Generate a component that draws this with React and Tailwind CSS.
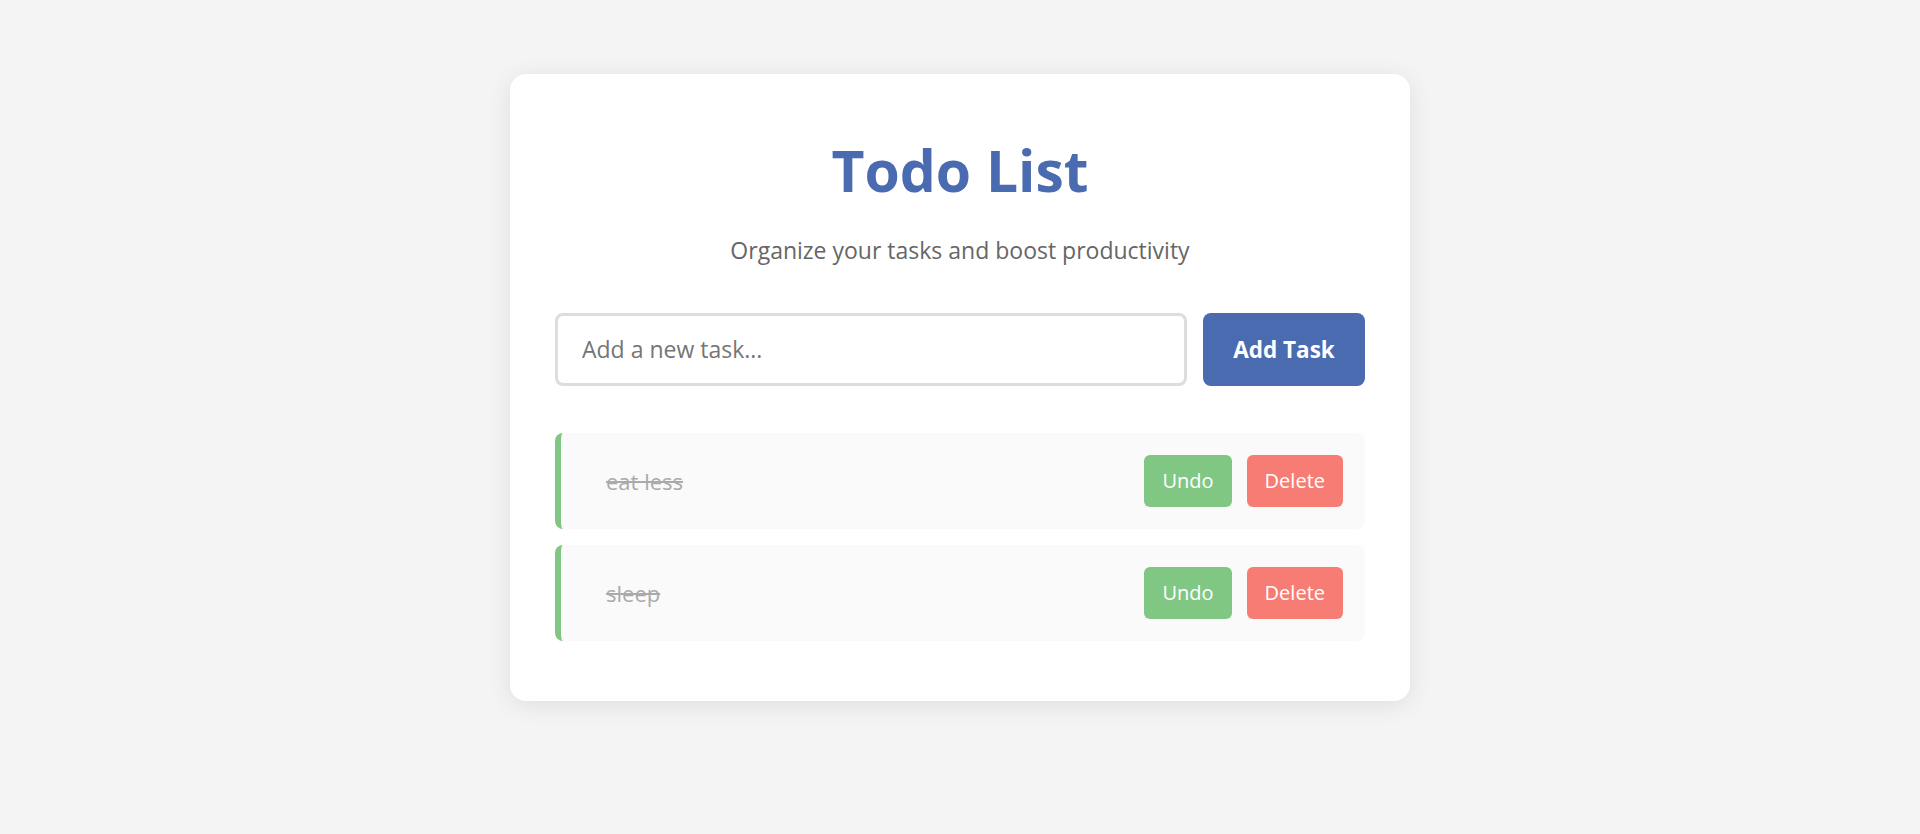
import { useState } from "react";

const initialTasks = [
  { id: 1, text: "eat less", done: true },
  { id: 2, text: "sleep", done: true },
];

const TaskItem = ({ task, onToggle, onDelete }) => (
  <li className="flex items-center justify-between h-[96px] bg-[#fafafa] rounded-lg border-l-[6px] border-[#81c784] pl-[45px] pr-[22px]">
    <span className={`text-[22px] ${task.done ? "line-through text-[#aaaaaa]" : "text-[#333333]"}`}>
      {task.text}
    </span>
    <div className="flex items-center gap-[15px]">
      <button
        onClick={() => onToggle(task.id)}
        className="h-[52px] px-[18px] rounded-md bg-[#81c784] text-white text-[20px]"
      >
        {task.done ? "Undo" : "Done"}
      </button>
      <button
        onClick={() => onDelete(task.id)}
        className="h-[52px] px-[18px] rounded-md bg-[#f77c73] text-white text-[20px]"
      >
        Delete
      </button>
    </div>
  </li>
);

export default function App() {
  const [tasks, setTasks] = useState(initialTasks);
  const [text, setText] = useState("");

  const addTask = () => {
    if (!text.trim()) return;
    setTasks([...tasks, { id: Date.now(), text: text.trim(), done: false }]);
    setText("");
  };

  return (
    <div className="min-h-screen bg-[#f4f4f4] pt-[74px] font-['Open_Sans',sans-serif]">
      <div className="mx-auto w-[900px] bg-white rounded-2xl shadow-[0_4px_24px_rgba(0,0,0,0.09)] p-[45px] pb-[60px]">
        <h1 className="mt-[15px] text-center text-[57px] leading-[72px] font-bold text-[#4a6bb0]">Todo List</h1>
        <p className="mt-[30px] text-center text-[23px] leading-[28px] text-[#666666]">
          Organize your tasks and boost productivity
        </p>

        {/* input row */}
        <div className="mt-[49px] flex gap-4 h-[73px]">
          <input
            value={text}
            onChange={(e) => setText(e.target.value)}
            onKeyDown={(e) => e.key === "Enter" && addTask()}
            placeholder="Add a new task..."
            className="flex-1 border-[3px] border-[#dddddd] rounded-lg px-6 text-[23px] text-[#333] placeholder:text-[#757575] outline-none"
          />
          <button
            onClick={addTask}
            className="w-[162px] rounded-lg bg-[#4a6bb0] text-white text-[22.5px] font-bold"
          >
            Add Task
          </button>
        </div>

        <ul className="mt-[47px] flex flex-col gap-4">
          {tasks.map((task) => (
            <TaskItem
              key={task.id}
              task={task}
              onToggle={(id) => setTasks(tasks.map((t) => (t.id === id ? { ...t, done: !t.done } : t)))}
              onDelete={(id) => setTasks(tasks.filter((t) => t.id !== id))}
            />
          ))}
        </ul>
      </div>
    </div>
  );
}
